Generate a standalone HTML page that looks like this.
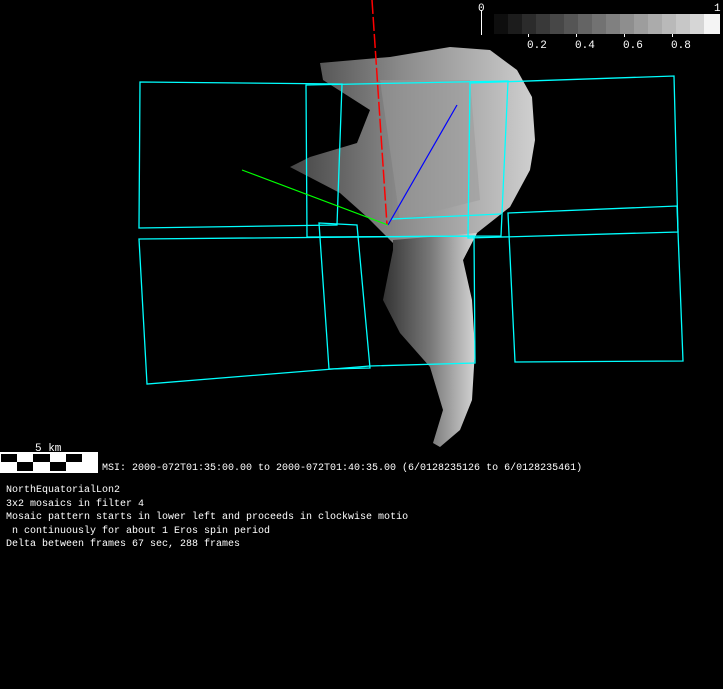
<!DOCTYPE html>
<html><head><meta charset="utf-8"><style>
html,body{margin:0;padding:0;background:#000;width:723px;height:689px;overflow:hidden}
.t{position:absolute;left:6px;color:#fff;font-family:"Liberation Mono",monospace;font-size:10px;white-space:pre;line-height:13.5px}
</style></head><body>
<svg width="723" height="689" style="position:absolute;left:0;top:0" xmlns="http://www.w3.org/2000/svg">
<defs>
<linearGradient id="g1" x1="0" y1="0" x2="1" y2="0">
<stop offset="0" stop-color="#444"/><stop offset="0.45" stop-color="#8a8a8a"/><stop offset="0.8" stop-color="#b5b5b5"/><stop offset="1" stop-color="#d0d0d0"/>
</linearGradient>
<linearGradient id="g2" x1="0" y1="0" x2="1" y2="0">
<stop offset="0" stop-color="#333"/><stop offset="0.5" stop-color="#777"/><stop offset="1" stop-color="#d8d8d8"/>
</linearGradient>
</defs>
<polygon fill="url(#g1)" points="320,63 390,57 450,47 490,50 517,70 532,97 535,140 530,170 510,207 477,233 463,260 400,250 367,217 340,193 290,167 310,157 357,143 370,110 323,80"/>
<polygon fill="url(#g2)" points="393,240 477,233 463,260 472,300 475,350 472,400 460,430 440,447 433,443 443,410 430,367 400,333 383,300 393,250"/>
<polygon fill="#999" opacity="0.5" points="380,80 470,80 480,200 400,220"/>
<g fill="none" stroke="#0ff" stroke-width="1.3">
<polygon points="140,82 342,84 337,225 139,228"/>
<polygon points="306,85 508,81 501,236 307,237"/>
<polygon points="470,83 674,76 678,232 468,238"/>
<polygon points="508,213 677,206 683,361 515,362"/>
<polygon points="319,223 357,225 370,368 329,369"/>
<polygon points="139,239 474,236 475,363 370,366 147,384"/>
<line x1="392" y1="219" x2="501" y2="214"/>
</g>
<line x1="372" y1="0" x2="387" y2="225" stroke="#f00" stroke-width="1.5" stroke-dasharray="14,3"/>
<line x1="457" y1="105" x2="388" y2="225" stroke="#00f" stroke-width="1.2"/>
<line x1="242" y1="170" x2="388" y2="225" stroke="#0f0" stroke-width="1.2"/>
<g>
<rect x="494" y="14" width="14" height="20" fill="#0e0e0e"/><rect x="508" y="14" width="14" height="20" fill="#1c1c1c"/>
<rect x="522" y="14" width="14" height="20" fill="#2b2b2b"/><rect x="536" y="14" width="14" height="20" fill="#393939"/>
<rect x="550" y="14" width="14" height="20" fill="#474747"/><rect x="564" y="14" width="14" height="20" fill="#555"/>
<rect x="578" y="14" width="14" height="20" fill="#646464"/><rect x="592" y="14" width="14" height="20" fill="#727272"/>
<rect x="606" y="14" width="14" height="20" fill="#808080"/><rect x="620" y="14" width="14" height="20" fill="#8e8e8e"/>
<rect x="634" y="14" width="14" height="20" fill="#9d9d9d"/><rect x="648" y="14" width="14" height="20" fill="#ababab"/>
<rect x="662" y="14" width="14" height="20" fill="#b9b9b9"/><rect x="676" y="14" width="14" height="20" fill="#c7c7c7"/>
<rect x="690" y="14" width="14" height="20" fill="#d6d6d6"/><rect x="704" y="14" width="16" height="20" fill="#f4f4f4"/>
</g>
<g stroke="#fff" stroke-width="1">
<line x1="481.5" y1="10" x2="481.5" y2="35"/><line x1="528.5" y1="34" x2="528.5" y2="37"/>
<line x1="576.5" y1="34" x2="576.5" y2="37"/><line x1="624.5" y1="34" x2="624.5" y2="37"/><line x1="672.5" y1="34" x2="672.5" y2="37"/>
</g>
<g fill="#fff" font-family="Liberation Mono, monospace" font-size="11">
<text x="478" y="11">0</text><text x="714" y="11">1</text>
<text x="527" y="48">0.2</text><text x="575" y="48">0.4</text><text x="623" y="48">0.6</text><text x="671" y="48">0.8</text>
<text x="35" y="451">5 km</text>
</g>
<text x="102" y="470" fill="#fff" font-family="Liberation Mono, monospace" font-size="10">MSI:  2000-072T01:35:00.00 to 2000-072T01:40:35.00 (6/0128235126 to 6/0128235461)</text>
<rect x="0" y="452" width="98" height="21" fill="#fff"/>
<g fill="#000">
<rect x="1" y="454" width="16" height="8"/><rect x="33" y="454" width="17" height="8"/><rect x="66" y="454" width="16" height="8"/>
<rect x="17" y="462" width="16" height="9"/><rect x="50" y="462" width="16" height="9"/>
</g>
</svg>
<div class="t" style="top:484px">NorthEquatorialLon2
3x2 mosaics in filter 4
Mosaic pattern starts in lower left and proceeds in clockwise motio
 n continuously for about 1 Eros spin period
Delta between frames 67 sec, 288 frames</div>
</body></html>
